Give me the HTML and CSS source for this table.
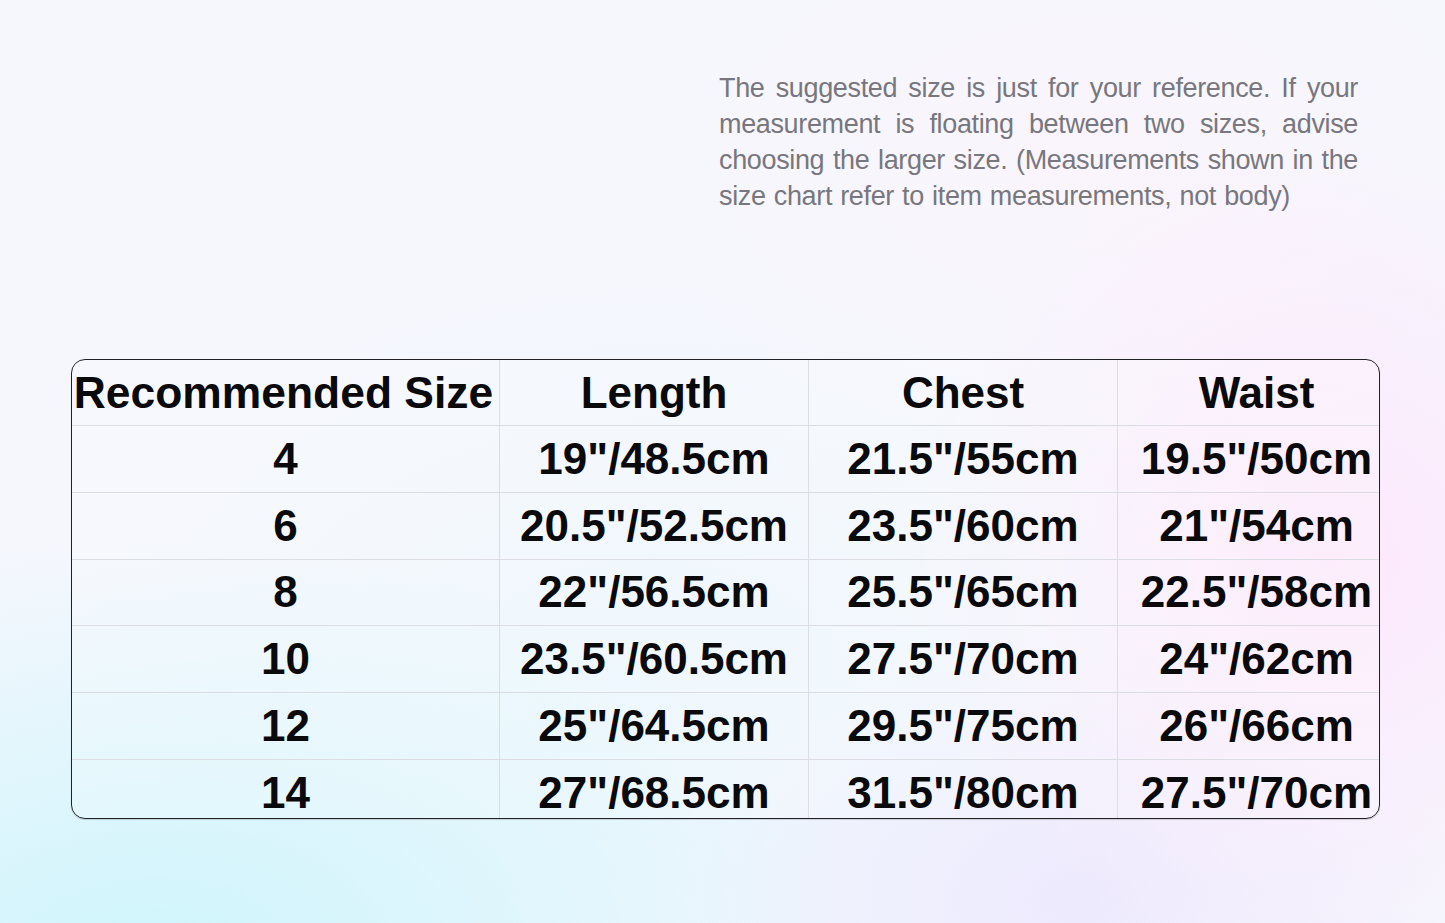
FILE: index.html
```html
<!DOCTYPE html>
<html lang="en">
<head>
<meta charset="utf-8">
<title>Size Chart</title>
<link rel="stylesheet" href="styles.css">
</head>
<body>
<div class="page">
  <p class="note">The suggested size is just for your reference. If your measurement is floating between two sizes, advise choosing the larger size. (Measurements shown in the size chart refer to item measurements, not body)</p>
  <div class="chart">
    <div class="row head">
      <div class="cell">Recommended Size</div>
      <div class="cell">Length</div>
      <div class="cell">Chest</div>
      <div class="cell last">Waist</div>
    </div>
    <div class="row">
      <div class="cell">4</div>
      <div class="cell">19"/48.5cm</div>
      <div class="cell">21.5"/55cm</div>
      <div class="cell last">19.5"/50cm</div>
    </div>
    <div class="row">
      <div class="cell">6</div>
      <div class="cell">20.5"/52.5cm</div>
      <div class="cell">23.5"/60cm</div>
      <div class="cell last">21"/54cm</div>
    </div>
    <div class="row">
      <div class="cell">8</div>
      <div class="cell">22"/56.5cm</div>
      <div class="cell">25.5"/65cm</div>
      <div class="cell last">22.5"/58cm</div>
    </div>
    <div class="row">
      <div class="cell">10</div>
      <div class="cell">23.5"/60.5cm</div>
      <div class="cell">27.5"/70cm</div>
      <div class="cell last">24"/62cm</div>
    </div>
    <div class="row">
      <div class="cell">12</div>
      <div class="cell">25"/64.5cm</div>
      <div class="cell">29.5"/75cm</div>
      <div class="cell last">26"/66cm</div>
    </div>
    <div class="row">
      <div class="cell">14</div>
      <div class="cell">27"/68.5cm</div>
      <div class="cell">31.5"/80cm</div>
      <div class="cell last">27.5"/70cm</div>
    </div>
  </div>
</div>
</body>
</html>
```

FILE: styles.css
```css
html, body {
  margin: 0;
  padding: 0;
  height: 100%;
}

body {
  width: 1445px;
  height: 923px;
  overflow: hidden;
  font-family: "Liberation Sans", Arial, sans-serif;
  background-color: #f5f7fd;
  background-image:
    radial-gradient(ellipse 420px 420px at 1330px 560px, rgba(253, 232, 252, 1), rgba(253, 232, 252, 0) 100%),
    radial-gradient(ellipse 380px 260px at 1080px 900px, rgba(236, 232, 253, 0.9), rgba(236, 232, 253, 0) 100%),
    radial-gradient(ellipse 720px 420px at 150px 960px, rgba(206, 245, 252, 1), rgba(206, 245, 252, 0) 100%),
    radial-gradient(ellipse 500px 300px at 1100px 160px, rgba(252, 244, 252, 0.8), rgba(252, 244, 252, 0) 100%),
    radial-gradient(ellipse 600px 420px at 650px 700px, rgba(234, 245, 253, 0.9), rgba(234, 245, 253, 0) 100%);
}

.page {
  display: flex;
  flex-direction: column;
  padding-top: 70px;
}

.note {
  margin: 0 0 0 719px;
  width: 639px;
  font-size: 27px;
  line-height: 36px;
  letter-spacing: -0.35px;
  word-spacing: 1px;
  color: #78777d;
  text-align: justify;
}

.chart {
  margin: 145px 0 0 71px;
  width: 1309px;
  height: 460px;
  box-sizing: border-box;
  border: 1px solid #222226;
  border-radius: 14px;
  overflow: hidden;
  background: rgba(255, 255, 255, 0.22);
  box-shadow: 0 1px 1px rgba(0, 0, 0, 0.15);
}

.row {
  display: grid;
  grid-template-columns: 427px 309px 309px 1fr;
  height: 66.8px;
  box-sizing: border-box;
  border-bottom: 1px solid #dcdde3;
}

.row.head {
  height: 66px;
}

.cell {
  display: flex;
  align-items: center;
  justify-content: center;
  font-size: 44px;
  font-weight: 700;
  color: #0a0a0c;
  white-space: nowrap;
}

.cell + .cell {
  border-left: 1px solid #dcdde3;
}

.cell.last {
  padding-left: 16px;
}

.row.head .cell:first-child {
  font-size: 44.4px;
  padding-right: 4px;
}
```
